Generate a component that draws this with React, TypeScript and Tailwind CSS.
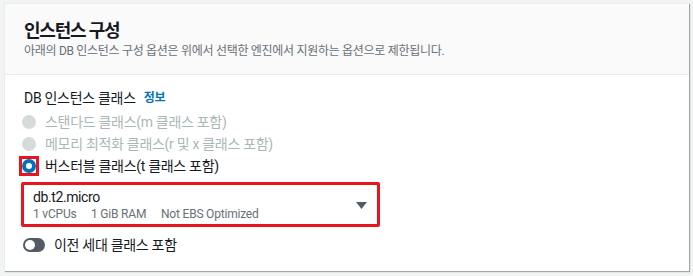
const font = { fontFamily: 'Roboto, "Noto Sans CJK KR", "Noto Sans", sans-serif' }

function Radio({ label, disabled, checked }: { label: string; disabled?: boolean; checked?: boolean }) {
  return (
    <div className="flex items-center h-[22px]">
      <div className="relative ml-[-2px] w-[14px] h-[14px]">
        {checked ? (
          <span className="block w-[14px] h-[14px] rounded-full border-[4px] border-[#0073bb] bg-white" />
        ) : (
          <span className="block w-[14px] h-[14px] rounded-full bg-[#d5dbdb]" />
        )}
        {checked && <span className="absolute inset-[-3px] border-[3px] border-[#e8151f]" />}
      </div>
      <span className={`ml-[9px] text-[14px] leading-[20px] ${disabled ? 'text-[#aab7b8]' : 'text-[#16191f]'}`}>
        {label}
      </span>
    </div>
  )
}

export default function App() {
  return (
    <div className="w-[693px] h-[276px] bg-[#f2f3f3] pt-[3px] pl-[4px] pr-[4px] tracking-[-0.3px]" style={font}>
      <div className="w-[685px] h-[268px] bg-white border-t border-l border-[#eaeded] shadow-[1px_1px_1px_0_rgba(0,28,36,0.35)] flex flex-col">
        {/* Header */}
        <div className="bg-[#fafafa] border-b border-[#eaeded] px-[19px] pt-[16px] pb-[15px]">
          <h2 className="text-[18px] leading-[22px] font-bold tracking-[-1.2px] text-[#16191f]">인스턴스 구성</h2>
          <p className="mt-[1px] text-[12px] leading-[16px] text-[#687078]">
            아래의 DB 인스턴스 구성 옵션은 위에서 선택한 엔진에서 지원하는 옵션으로 제한됩니다.
          </p>
        </div>

        {/* Body */}
        <div className="px-[19px] pt-[13px]">
          <div className="flex items-center text-[14px] leading-[20px] text-[#16191f]">
            DB 인스턴스 클래스
            <span className="ml-[8px] text-[12px] font-bold text-[#0073bb]">정보</span>
          </div>

          <div className="mt-[3px] flex flex-col">
            <Radio label="스탠다드 클래스(m 클래스 포함)" disabled />
            <Radio label="메모리 최적화 클래스(r 및 x 클래스 포함)" disabled />
            <Radio label="버스터블 클래스(t 클래스 포함)" checked />
          </div>

          {/* Select */}
          <div className="mt-[5px] ml-[-3px] w-[359px] h-[45px] border-[3px] border-[#e8151f] rounded-[2px] flex items-center pl-[9px] pr-[10px] tracking-normal">
            <div className="flex-1 flex flex-col">
              <span className="text-[14px] leading-[18px] tracking-[-0.4px] text-[#16191f]">db.t2.micro</span>
              <div className="flex text-[12px] leading-[16px] text-[#687078] tracking-[-0.2px]">
                <span className="w-[58px]">1 vCPUs</span>
                <span className="w-[70px]">1 GiB RAM</span>
                <span>Not EBS Optimized</span>
              </div>
            </div>
            <svg width="11" height="7" viewBox="0 0 11 7" className="mt-[2px]">
              <path d="M0 0 H11 L5.5 7 Z" fill="#545b64" />
            </svg>
          </div>

          {/* Toggle */}
          <div className="mt-[8px] flex items-center">
            <span className="relative ml-[-1px] w-[22px] h-[14px] rounded-full bg-[#545b64]">
              <span className="absolute left-[2px] top-[2px] w-[10px] h-[10px] rounded-full bg-white" />
            </span>
            <span className="ml-[9px] text-[14px] leading-[20px] text-[#16191f]">이전 세대 클래스 포함</span>
          </div>
        </div>
      </div>
    </div>
  )
}
